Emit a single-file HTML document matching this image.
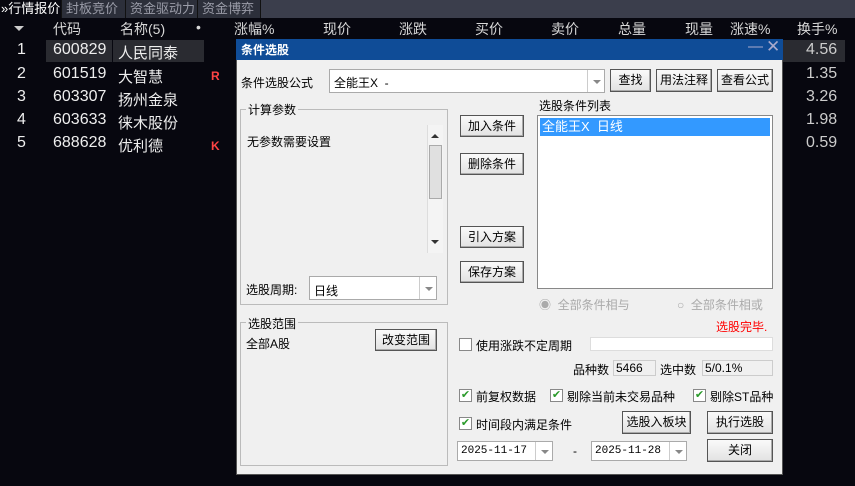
<!DOCTYPE html><html><head><meta charset="utf-8"><style>
*{margin:0;padding:0;box-sizing:border-box}
body{width:855px;height:486px;background:#07070f;font-family:"Liberation Sans","Noto Sans CJK SC",sans-serif;position:relative;overflow:hidden;color:#e8e8e8}
.a{position:absolute;white-space:nowrap}
.tab{position:absolute;top:0;height:18px;font-size:13px;line-height:18px;color:#9a9ca8;background:#2c2f3a;padding:0 4px;border-right:1px solid #111;white-space:nowrap;overflow:hidden}
.h{font-size:14px;color:#d8d8d8;top:19px}
.r{font-size:16px;color:#eee}
.n{font-size:15px;color:#eee}
.d{font-size:12px;color:#000}
.btn{position:absolute;background:linear-gradient(#fafafa,#e2e2e2);border:1px solid #555;box-shadow:inset -1px -1px #aaa;font-size:12px;color:#000;text-align:center;line-height:20px}
.inp{position:absolute;background:#fff;border:1px solid #aaa}
.dd{position:absolute;right:0;top:0;bottom:0;width:17px;border-left:1px solid #ccc;background:#fff}
.dd:after{content:"";position:absolute;left:5px;top:45%;border:4px solid transparent;border-top:4px solid #888}
.cb{position:absolute;width:13px;height:13px;border:1px solid #888;background:#fff;font-size:11px;line-height:11px;color:#2a9a2a;text-align:center}
.grp{position:absolute;border:1px solid #bbb}
</style></head><body>
<div class="a" style="left:0;top:0;width:855px;height:18px;background:#3b3e4c"></div>
<div class="tab" style="left:0;background:#07070f;color:#fff;padding:0 0 0 1px;width:62px">»行情报价</div>
<div class="tab" style="left:62px;width:64px">封板竞价</div>
<div class="tab" style="left:126px;width:72px">资金驱动力</div>
<div class="tab" style="left:198px;width:63px">资金博弈</div>
<div class="a" style="left:14px;top:26px;border:5px solid transparent;border-top:5px solid #ccc"></div>
<div class="a h" style="left:53px">代码</div><div class="a h" style="left:120px">名称(5)</div><div class="a h" style="left:196px">•</div>
<div class="a h" style="left:234px">涨幅%</div><div class="a h" style="left:323px">现价</div><div class="a h" style="left:399px">涨跌</div>
<div class="a h" style="left:475px">买价</div><div class="a h" style="left:551px">卖价</div><div class="a h" style="left:618px">总量</div>
<div class="a h" style="left:685px">现量</div><div class="a h" style="left:730px">涨速%</div><div class="a h" style="left:797px">换手%</div>
<div class="a" style="left:46px;top:40px;width:66px;height:22px;background:#2a2b31"></div>
<div class="a" style="left:113px;top:40px;width:91px;height:22px;background:#2a2b31"></div>
<div class="a" style="left:783px;top:40px;width:62px;height:22px;background:#2a2b31"></div>
<div class="a r" style="left:17px;top:41px">1</div><div class="a r" style="left:53px;top:41px">600829</div><div class="a n" style="left:118px;top:42px">人民同泰</div>
<div class="a r" style="left:17px;top:65px">2</div><div class="a r" style="left:53px;top:65px">601519</div><div class="a n" style="left:118px;top:66px">大智慧</div>
<div class="a r" style="left:17px;top:88px">3</div><div class="a r" style="left:53px;top:88px">603307</div><div class="a n" style="left:118px;top:89px">扬州金泉</div>
<div class="a r" style="left:17px;top:111px">4</div><div class="a r" style="left:53px;top:111px">603633</div><div class="a n" style="left:118px;top:112px">徕木股份</div>
<div class="a r" style="left:17px;top:134px">5</div><div class="a r" style="left:53px;top:134px">688628</div><div class="a n" style="left:118px;top:135px">优利德</div>
<div class="a" style="left:211px;top:69px;color:#f44;font-size:12px;font-weight:bold">R</div>
<div class="a" style="left:211px;top:139px;color:#f44;font-size:12px;font-weight:bold">K</div>
<div class="a r" style="left:806px;top:41px;color:#ccc">4.56</div><div class="a r" style="left:806px;top:65px;color:#ccc">1.35</div>
<div class="a r" style="left:806px;top:88px;color:#ccc">3.26</div><div class="a r" style="left:806px;top:111px;color:#ccc">1.98</div><div class="a r" style="left:806px;top:134px;color:#ccc">0.59</div>

<div class="a" style="left:236px;top:39px;width:547px;height:436px;background:#f0f0f0;border:1px solid #555"></div>
<div class="a" style="left:236px;top:39px;width:547px;height:21px;background:#0f4c97"></div>
<div class="a" style="left:241px;top:41px;font-size:12px;font-weight:bold;color:#fff">条件选股</div>
<div class="a" style="left:748px;top:38px;font-size:15px;color:#aac">—</div><div class="a" style="left:766px;top:37px;font-size:17px;color:#aac">✕</div>

<div class="a d" style="left:241px;top:74px">条件选股公式</div>
<div class="inp" style="left:329px;top:69px;width:276px;height:24px"><div class="a d" style="left:4px;top:4px">全能王X&nbsp;&nbsp;-</div><div class="dd"></div></div>
<div class="btn" style="left:610px;top:69px;width:41px;height:23px">查找</div>
<div class="btn" style="left:656px;top:69px;width:56px;height:23px">用法注释</div>
<div class="btn" style="left:717px;top:69px;width:56px;height:23px">查看公式</div>

<div class="grp" style="left:240px;top:109px;width:208px;height:196px"></div>
<div class="a d" style="left:246px;top:101px;background:#f0f0f0;padding:0 2px">计算参数</div>
<div class="a d" style="left:247px;top:133px">无参数需要设置</div>
<div class="a" style="left:427px;top:125px;width:16px;height:128px;background:#f4f4f4;border-left:1px solid #ddd"></div>
<div class="a" style="left:431px;top:130px;border:4px solid transparent;border-bottom:4px solid #333"></div>
<div class="a" style="left:431px;top:240px;border:4px solid transparent;border-top:4px solid #333"></div>
<div class="a" style="left:429px;top:145px;width:13px;height:54px;background:#e0e0e0;border:1px solid #aaa"></div>
<div class="a d" style="left:246px;top:281px">选股周期:</div>
<div class="inp" style="left:309px;top:276px;width:128px;height:24px"><div class="a d" style="left:4px;top:5px">日线</div><div class="dd"></div></div>

<div class="grp" style="left:240px;top:322px;width:208px;height:144px"></div>
<div class="a d" style="left:246px;top:315px;background:#f0f0f0;padding:0 2px">选股范围</div>
<div class="a d" style="left:246px;top:335px">全部A股</div>
<div class="btn" style="left:375px;top:329px;width:62px;height:22px">改变范围</div>

<div class="btn" style="left:460px;top:115px;width:64px;height:22px">加入条件</div>
<div class="btn" style="left:460px;top:153px;width:64px;height:22px">删除条件</div>
<div class="btn" style="left:460px;top:226px;width:64px;height:22px">引入方案</div>
<div class="btn" style="left:460px;top:261px;width:64px;height:22px">保存方案</div>

<div class="a d" style="left:539px;top:97px">选股条件列表</div>
<div class="inp" style="left:537px;top:115px;width:236px;height:174px;border-color:#888"><div class="a" style="left:2px;top:2px;width:230px;height:18px;background:#3399ff;color:#fff;font-size:13px;padding-left:2px;line-height:18px">全能王X&nbsp;&nbsp;日线</div></div>
<div class="a" style="left:539px;top:296px;font-size:12px;color:#aaa">◉&nbsp;&nbsp;全部条件相与</div>
<div class="a" style="left:677px;top:296px;font-size:12px;color:#aaa">○&nbsp;&nbsp;全部条件相或</div>
<div class="a" style="left:716px;top:318px;font-size:12px;color:#f00">选股完毕.</div>

<div class="cb" style="left:459px;top:338px"></div>
<div class="a d" style="left:476px;top:337px">使用涨跌不定周期</div>
<div class="a" style="left:590px;top:337px;width:183px;height:14px;background:#fff;border:1px solid #ddd"></div>
<div class="a d" style="left:573px;top:361px">品种数</div>
<div class="a d" style="left:613px;top:360px;width:43px;height:16px;border:1px solid #ccc;padding-left:2px">5466</div>
<div class="a d" style="left:660px;top:361px">选中数</div>
<div class="a d" style="left:702px;top:360px;width:71px;height:16px;border:1px solid #ccc;padding-left:2px">5/0.1%</div>

<div class="cb" style="left:459px;top:389px">✔</div><div class="a d" style="left:476px;top:388px">前复权数据</div>
<div class="cb" style="left:550px;top:389px">✔</div><div class="a d" style="left:567px;top:388px">剔除当前未交易品种</div>
<div class="cb" style="left:693px;top:389px">✔</div><div class="a d" style="left:710px;top:388px">剔除ST品种</div>
<div class="cb" style="left:459px;top:417px">✔</div><div class="a d" style="left:476px;top:416px">时间段内满足条件</div>
<div class="btn" style="left:622px;top:411px;width:69px;height:23px">选股入板块</div>
<div class="btn" style="left:707px;top:411px;width:66px;height:23px">执行选股</div>
<div class="btn" style="left:707px;top:439px;width:66px;height:23px">关闭</div>
<div class="inp" style="left:457px;top:441px;width:96px;height:20px"><div class="a" style="left:3px;top:3px;font-family:'Liberation Mono',monospace;font-size:11px;color:#000">2025-11-17</div><div class="dd"></div></div>
<div class="a d" style="left:573px;top:444px">-</div>
<div class="inp" style="left:591px;top:441px;width:96px;height:20px"><div class="a" style="left:3px;top:3px;font-family:'Liberation Mono',monospace;font-size:11px;color:#000">2025-11-28</div><div class="dd"></div></div>
</body></html>
